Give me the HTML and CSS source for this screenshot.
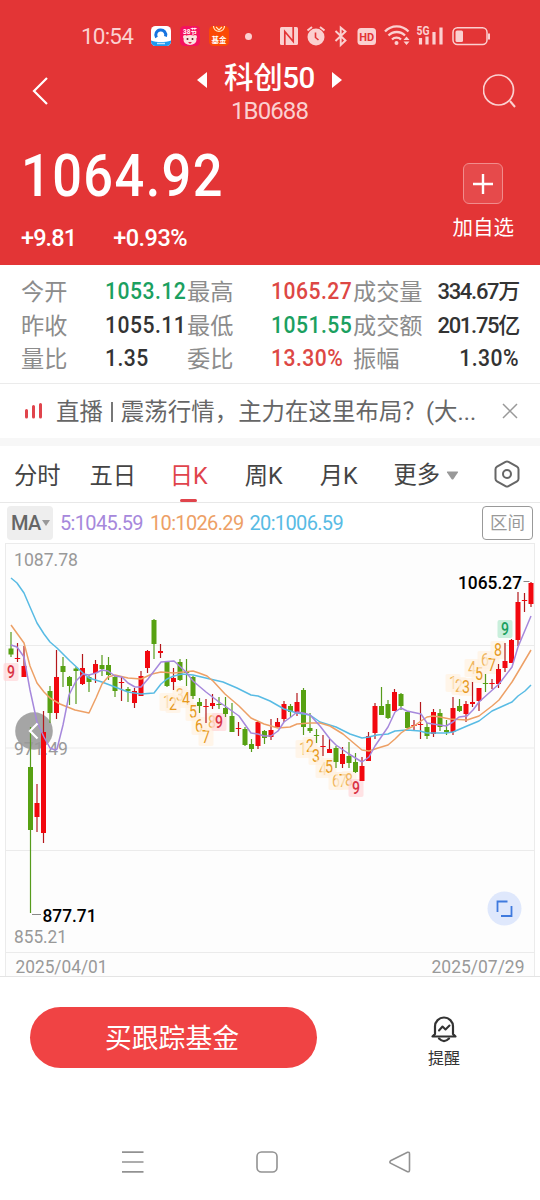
FILE: index.html
```html
<!DOCTYPE html>
<html lang="zh-CN">
<head>
    <meta charset="UTF-8">
    <meta name="viewport" content="width=device-width, initial-scale=1.0">
    <title>科创50</title>
    <link rel="stylesheet" href="styles.css">
</head>
<body>
    <header class="header">
        <div class="status">
            <span class="clock">10:54</span>
            <svg class="app" width="20" height="20" viewBox="0 0 20 20">
                <rect width="20" height="20" rx="4.5" fill="#fff"/>
                <path d="M0 14.500c6 2 14 2 20 0v1a4.500 4.500 0 0 1-4.500 4.500h-11A4.500 4.500 0 0 1 0 15.500z" fill="#1f9bf0"/>
                <path d="M5.500 11.500a5 5 0 1 1 9-1" fill="none" stroke="#1674e0" stroke-width="3"/>
                <path d="M6 17.500h8" stroke="#bfe4ff" stroke-width="1.500"/>
            </svg>
            <svg class="app" width="20" height="20" viewBox="0 0 20 20">
                <rect width="20" height="20" rx="4.5" fill="#f5115f"/>
                <text x="10" y="7.500" class="app-text" font-size="6.500">38节</text>
                <ellipse cx="10" cy="14" rx="6.500" ry="5" fill="#fbe3e0"/>
                <circle cx="5" cy="11" r="2" fill="#fbe3e0"/>
                <circle cx="15" cy="11" r="2" fill="#fbe3e0"/>
                <circle cx="7.500" cy="13" r="1" fill="#5b1a2a"/>
                <circle cx="12.500" cy="13" r="1" fill="#5b1a2a"/>
                <path d="M8 16h4l-2 2z" fill="#e02850"/>
            </svg>
            <svg class="app" width="20" height="20" viewBox="0 0 20 20">
                <rect width="20" height="20" rx="4.500" fill="#fb4a05"/>
                <path d="M4.500 0a5.500 5.500 0 0 0 11 0M7 1l3 3 3-3" fill="none" stroke="#ffe9c8" stroke-width="1.200"/>
                <text x="10" y="16.500" class="app-text" font-size="7.500">基金</text>
            </svg>
            <span class="dot"></span>
            <svg class="sys" width="212" height="24" viewBox="279 25 212 24" fill="none" stroke="#fbd0d0" stroke-width="1.600">
                <!-- nfc -->
                <rect x="280" y="28" width="18" height="18" rx="1.500" fill="#fbd0d0" stroke="none"/>
                <path d="M284.800 46V32.500l8.400 10V28" stroke="#e33536" stroke-width="1.700"/>
                <!-- alarm -->
                <circle cx="316" cy="38" r="8.500" fill="#fbd0d0" stroke="none"/>
                <path d="M307.500 31.500l4.500-3.500M324.500 31.500l-4.500-3.500" stroke-width="2"/>
                <path d="M315.500 33.500v5l3 2.500" stroke="#e33536" stroke-width="1.600"/>
                <!-- bluetooth -->
                <path d="M335.500 32l10 9.500-4.800 4.500V28.500l4.800 4-10 9.500" stroke-width="1.900"/>
                <!-- hd -->
                <rect x="357.500" y="29" width="18.500" height="17" rx="3.500" fill="#fbd0d0" stroke="none"/>
                <text x="366.800" y="42" class="hd">HD</text>
                <!-- wifi -->
                <path d="M385 32.500a16 16 0 0 1 23.500 0M388.500 36.500a11.500 11.500 0 0 1 16.500 0M392 40.500a6.500 6.500 0 0 1 9 0" stroke-width="2.300"/>
                <circle cx="396.500" cy="44" r="2" fill="#fbd0d0" stroke="none"/>
                <path d="M403.500 41l3-3.500 3 3.500zM403.500 42.500l3 3.500 3-3.500z" fill="#fbd0d0" stroke="none"/>
                <!-- signal -->
                <text x="416.500" y="35.700" class="net" textLength="13" lengthAdjust="spacingAndGlyphs">5G</text>
                <path d="M420.500 39V45.500M427 37.500v8M434 33v12.500M441 28.500v17" stroke-width="3.200"/>
                <!-- battery -->
                <rect x="453" y="28.800" width="34" height="16.800" rx="4.500" stroke-width="1.500"/>
                <rect x="455.500" y="31.500" width="7.500" height="11.500" rx="1.500" fill="#fbd0d0" stroke="none"/>
                <path d="M489 34.500v6" stroke-width="2"/>
            </svg>
        </div>

        <div class="topbar">
            <svg width="20" height="30" viewBox="0 0 20 30" fill="none" stroke="#fff" stroke-width="2.200">
                <path d="M17 2L4 15l13 13"/>
            </svg>
            <div class="title">
                <div class="name">
                    <svg width="10" height="16" viewBox="0 0 10 16" fill="#fff"><path d="M10 0v16L0 8z"/></svg>
                    <h1>科创50</h1>
                    <svg width="10" height="16" viewBox="0 0 10 16" fill="#fff"><path d="M0 0v16l10-8z"/></svg>
                </div>
                <div class="code">1B0688</div>
            </div>
            <svg width="34" height="36" viewBox="0 0 34 36" fill="none" stroke="#fbd0d0" stroke-width="1.700">
                <circle cx="15.500" cy="17" r="15"/>
                <path d="M27 28l5 6" stroke-width="2"/>
            </svg>
        </div>

        <div class="price-row">
            <div>
                <div class="price">1064.92</div>
                <div class="change"><span>+9.81</span><span>+0.93%</span></div>
            </div>
            <div class="add">
                <div class="add-box">
                    <svg width="22" height="22" viewBox="0 0 22 22" stroke="#fff" stroke-width="2.400"><path d="M11 1v20M1 11h20"/></svg>
                </div>
                <div>加自选</div>
            </div>
        </div>
    </header>

    <section class="quote">
        <span class="label">今开</span><span class="num green">1053.12</span>
        <span class="label">最高</span><span class="num red">1065.27</span>
        <span class="label">成交量</span><span class="right small">334.67万</span>
        <span class="label">昨收</span><span class="num">1055.11</span>
        <span class="label">最低</span><span class="num green">1051.55</span>
        <span class="label">成交额</span><span class="right small">201.75亿</span>
        <span class="label">量比</span><span class="num">1.35</span>
        <span class="label">委比</span><span class="num red">13.30%</span>
        <span class="label">振幅</span><span class="num right">1.30%</span>
    </section>

    <section class="news">
        <svg width="20" height="18" viewBox="0 0 20 18" stroke="#e0444c" stroke-width="3" stroke-linecap="round">
            <path d="M2.500 8.500V15M9.500 4.500V15M16.500 2.500V15"/>
        </svg>
        <p><span>直播</span><i class="bar"></i><span class="headline">震荡行情，主力在这里布局？(大...</span></p>
        <svg width="16" height="16" viewBox="0 0 16 16" stroke="#999" stroke-width="1.500"><path d="M1 1l14 14M15 1L1 15"/></svg>
    </section>

    <nav class="tabs">
        <span>分时</span>
        <span>五日</span>
        <span class="active">日K</span>
        <span>周K</span>
        <span>月K</span>
        <span class="more">更多
            <svg width="13" height="9" viewBox="0 0 13 9" fill="#999"><path d="M1.500.5h10q1 0 .4 1L7.500 8q-1 1-2 0L1 1.500q-.5-1 .5-1z"/></svg>
        </span>
        <svg class="gear" width="28" height="28" viewBox="0 0 28 28" fill="none" stroke="#666" stroke-width="2">
            <path d="M12.500 1.800q1.500-.8 3 0l8.500 4.900q1.500.9 1.500 2.600v9.400q0 1.700-1.500 2.600l-8.500 4.900q-1.500.8-3 0L4 21.300q-1.500-.9-1.500-2.600V9.300Q2.500 7.600 4 6.700z"/>
            <circle cx="14" cy="14" r="4"/>
        </svg>
    </nav>

    <div class="ma">
        <span class="ma-btn">MA<svg width="8" height="6" viewBox="0 0 8 6" fill="#999"><path d="M0 0h8L4 6z"/></svg></span>
        <span class="ma5">5:1045.59</span>
        <span class="ma10">10:1026.29</span>
        <span class="ma20">20:1006.59</span>
        <span class="range">区间</span>
    </div>

    <svg id="chart" class="chart" width="540" height="434" viewBox="0 543 540 434"></svg>

    <footer class="footer">
        <div class="buy">买跟踪基金</div>
        <div class="remind">
            <svg width="28" height="28" viewBox="0 0 28 28" fill="none" stroke="#333" stroke-width="2.200" stroke-linecap="round" stroke-linejoin="round">
                <path d="M2.500 21.500L5 19V11.500a9 9 0 0 1 18 0V19l2.500 2.500z"/>
                <path d="M9 23.500q5 5 10 0"/>
                <path d="M9 15.500l3.500-4 3 3 4-4" stroke-width="2"/>
            </svg>
            <div>提醒</div>
        </div>
    </footer>

    <div class="sysnav">
        <svg width="22" height="22" viewBox="0 0 22 22" stroke="#929292" stroke-width="1.700"><path d="M0 1.200h21.500M0 11h21.500M0 20.800h21.500"/></svg>
        <svg width="22" height="22" viewBox="0 0 22 22" fill="none" stroke="#929292" stroke-width="1.600"><rect x="1" y="1" width="20" height="20" rx="4.500"/></svg>
        <svg width="22" height="22" viewBox="0 0 22 22" fill="none" stroke="#929292" stroke-width="1.600"><path d="M1.500 9.800L18.500 1.300Q20.500.8 20.500 3v16q0 2.200-2 1.700L1.500 12.200q-1.200-1.200 0-2.400z"/></svg>
    </div>

    <script>
        // high, body top, body bottom, low, up(1) / down(0)
        const candles = [
            [632,648.5,654.5,657,0],[643,658,659,662,1],[646,666,677,677,1],[727,767,830,913,0],[784,803,817,832,1],
            [711,732,833,843,1],[686,691,713,723,0],[650,677,713,719,1],[657,666,672,687,0],[676,677,686,705,0],
            [667,668.5,671,704,0],[654,668,684,685,1],[675,677,682,692,0],[660,664,673,683,1],[655,665,669,676,0],
            [657,665,675,680,0],[675,677,691,697,0],[677,682,683,701,1],[687,689,691,702,0],[688,691,703,708,1],
            [671,676,696,696,1],[650,651,668,673,1],[619,620,644,659,0],[644,651,653,658,1],[661,662,686,687,0],
            [668,678,682,690,1],[659,662,680,681,0],[659,672,673,686,0],[676,677,696,699,0],[698,702,706,713,0],
            [699,706,707,723,1],[694,703,706,709,1],[697,704,705,709,0],[697,708,714,717,0],[703,716,732,732,0],
            [722,728,729,736,1],[727,729,745,746,0],[739,744,749,752,0],[721,722,746,749,1],[730,731,738,744,0],
            [719,730,737,740,1],[718,722,727,728,1],[701,704,719,722,1],[704,706,712,717,0],[693,702,713,716,1],
            [688,690,727,735,0],[713,728,731,733,0],[729,735,736,743,0],[735,746,747,756,1],[739,749,753,753,1],
            [746,748,762,768,0],[747,754,764,768,1],[742,756,763,768,0],[753,762,772,773,0],[757,766,781,781,1],
            [732,736,761,761,1],[703,706,733,739,1],[687,706,715,715,0],[700,704,718,719,0],[689,692,711,711,1],
            [693,694,706,710,0],[711,712,728,729,0],[720,725,726,731,1],[702,724,725,739,1],[723,727,736,739,0],
            [709,712,734,737,1],[709,713,727,731,0],[720,730,732,735,0],[697,708,732,735,1],[699,706,711,712,0],
            [701,704,714,722,1],[682,702,704,707,1],[688,688,701,711,1],[674,683,684,692,0],[679,683,684,689,1],
            [664,669,684,688,1],[643,661,668,672,1],[639,640,663,663,1],[592,602,640,646,1],[593,600,601,612,1],
            [582,583,604,607,1]
        ];
        const lines = {
            '#58bbe4': '11,578 17,583 24,593 30,607 37,623 44,634 50,642 57,648 70,661 83,673 89,678 102,682 115,687 128,692 141,694 154,693 161,684 167,679 174,676 182,674 193,675 210,679 223,682 237,688 251,695 258,696 270,701 284,709 297,713 310,715 320,722 336,727 350,734 362,738 369,737 377,735 388,734 395,731 407,730 420,731 427,733 446,733 453,732 467,726 479,721 492,711 512,702 518,696 525,691 531,685',
            '#eda066': '11,625 24,643 30,666 37,683 44,692 50,698 60,704 75,710 89,713 96,698 102,684 108,677 115,675 128,678 141,679 152,674 161,672 174,673 193,671 199,673 207,676 213,681 225,694 239,706 251,718 264,724 278,728 290,727 297,724 310,723 320,723 330,726 343,734 356,745 362,750 369,751 378,748 388,745 395,739 401,733 407,729 414,726 421,721 427,717 433,716 440,717 450,719 467,720 479,716 492,706 499,700 512,682 518,672 531,650',
            '#a688dc': '11,645 17,647 24,657 30,690 37,722 44,737 50,748 55,750 57,749 63,725 69,695 76,681 83,674 89,675 96,673 102,670 108,671 115,676 122,677 128,683 135,687 141,687 148,679 161,662 174,661 186,672 193,681 206,692 219,702 225,706 239,716 251,733 258,734 264,736 271,736 278,731 284,722 291,717 297,712 303,713 310,715 320,726 330,739 336,745 349,754 362,762 369,757 375,746 388,727 395,712 401,708 407,711 421,714 427,723 433,724 446,726 453,722 459,717 467,716 473,710 479,702 499,684 512,667 518,647 531,616'
        };
        // x, y, digit, kind
        const marks = [
            [11,672,9,'hot'],
            [167,702,1,'dim'],[173,704,2,''],[180,695,3,'dim'],[186,699,4,''],[193,712,5,''],[199,726,6,''],[206,737,7,''],[212,722,8,'dim'],[219,722,9,'hot'],
            [303,749,1,'dim'],[310,746,2,''],[316,756,3,''],[323,769,4,'dim'],[329,767,5,''],[336,781,6,'dim'],[343,781,7,''],[349,780,8,'dim'],[356,788,9,'hot'],
            [453,683,1,'dim'],[459,686,2,'dim'],[466,687,3,''],[472,668,4,'dim'],[479,674,5,''],[485,660,6,'dim'],[492,665,7,''],[498,650,8,''],[505,629,9,'cool']
        ];

        let out = '<rect class="frame" x="5.5" y="543.5" width="529" height="440"/>';
        [645.5, 748, 850.5, 952.5].forEach(y => out += `<path class="grid" d="M5.5 ${y}h529"/>`);
        out += '<path class="bottom" d="M0 976.500h540"/>';

        function label(x, y, w, text, cls) {
            out += `<text class="${cls}" x="${x}" y="${y}" textLength="${w}" lengthAdjust="spacingAndGlyphs">${text}</text>`;
        }
        out += '<circle cx="34" cy="731" r="18.800" fill="#a5a5a5"/>';
        label(14, 566, 64, '1087.78', 'axis');
        label(14, 755, 54, '971.49', 'axis');
        label(14, 942.5, 53, '855.21', 'axis');
        label(15.5, 972.5, 92, '2025/04/01', 'axis');
        label(431.5, 972.5, 93, '2025/07/29', 'axis');

        marks.forEach(([x, y, n, kind]) => {
            out += `<g class="mark ${kind}"><rect x="${x - 7.5}" y="${y - 9}" width="15" height="18" rx="2"/><text x="${x - 4}" y="${y + 6}" textLength="8" lengthAdjust="spacingAndGlyphs">${n}</text></g>`;
        });

        candles.forEach(([high, top, bottom, low, up], i) => {
            const x = 11 + i * 6.5;
            const h = bottom - top;
            const w = h < 1.5 ? 5.4 : 5;
            out += `<g class="${up ? 'up' : 'down'}"><path d="M${x} ${high}V${low}"/><rect x="${x - w / 2}" y="${top}" width="${w}" height="${h}"/></g>`;
        });

        for (const color in lines) {
            out += `<polyline class="line" stroke="${color}" points="${lines[color]}"/>`;
        }

        out += '<path d="M37.500 723.500l-7.500 7.500 7.500 7.500" fill="none" stroke="#fff" stroke-width="2.200"/>';
        out += '<path d="M32 914.500h9M523.500 581.500h6" stroke="#888"/>';
        label(42.5, 922, 54, '877.71', 'peak');
        label(458, 589, 64, '1065.27', 'peak');

        out += '<circle cx="504.500" cy="908.500" r="17" fill="#dfe8fc"/>';
        out += '<path d="M497.500 912v-10.500h10M511.500 906v10h-10.500" fill="none" stroke="#3f7ade" stroke-width="1.800"/>';

        document.getElementById('chart').innerHTML = out;
    </script>
</body>
</html>
```
FILE: styles.css
```css
body {
    margin: 0;
    width: 540px;
    height: 1200px;
    background-color: #fff;
    color: #333;
    font-family: Roboto, "Noto Sans CJK SC", sans-serif;
    overflow: hidden;
}
svg {
    display: block;
    flex: none;
}
.header {
    height: 265px;
    background-color: #e33536;
    color: #fff;
}
.status {
    display: flex;
    align-items: center;
    height: 44px;
    padding: 14px 0 0 81px;
}
.clock {
    width: 70px;
    font-size: 22.5px;
    line-height: 24px;
    letter-spacing: -0.8px;
    color: #fbd0d0;
}
.app {
    margin-right: 9px;
}
.app-text {
    fill: #fff;
    font-weight: 700;
    text-anchor: middle;
}
.dot {
    width: 7px;
    height: 7px;
    margin: 0 27px 0 7px;
    border-radius: 50%;
    background-color: #fbd0d0;
}
.hd {
    font-size: 11px;
    font-weight: 700;
    text-anchor: middle;
    fill: #e33536;
    stroke: none;
}
.net {
    font-size: 12px;
    font-weight: 700;
    fill: #fbd0d0;
    stroke: none;
}
.topbar {
    display: flex;
    justify-content: space-between;
    align-items: center;
    height: 66px;
    padding: 0 23px 0 30px;
}
.title {
    text-align: center;
    padding-top: 2px;
    margin-left: 6px;
}
.name {
    display: flex;
    align-items: center;
    justify-content: center;
    gap: 17px;
}
.name svg {
    margin-top: 4px;
}
.name h1 {
    margin: 0;
    font-size: 29.5px;
    font-weight: 500;
    line-height: 38px;
    letter-spacing: -0.4px;
}
.code {
    font-size: 24px;
    line-height: 29px;
    letter-spacing: -0.9px;
    color: #fbd0d0;
}
.price-row {
    display: flex;
    justify-content: space-between;
    padding: 20px 26px 0 21px;
}
/* the figures are narrower than the text face */
.price {
    font-size: 59.5px;
    font-weight: 500;
    line-height: 64px;
    letter-spacing: 1.6px;
    transform: scaleX(0.88);
    transform-origin: left;
}
.change {
    display: flex;
    gap: 37px;
    margin-top: 16px;
    font-size: 23.5px;
    line-height: 28px;
    letter-spacing: -0.9px;
    font-weight: 500;
}
.change span + span {
    letter-spacing: -0.5px;
}
.add {
    padding-top: 19px;
    text-align: center;
    font-size: 20.5px;
    line-height: 30px;
}
.add-box {
    display: flex;
    justify-content: center;
    align-items: center;
    width: 38px;
    height: 39px;
    margin: 0 auto 9px;
    border: 1px solid #f18c8c;
    border-radius: 6px;
    background-color: #e64a4b;
}
.quote {
    display: grid;
    grid-template-columns: 83.5px 82.5px 83.5px 82.5px 79px 87px;
    grid-auto-rows: 33.5px;
    height: 119px;
    box-sizing: border-box;
    padding: 10px 0 0 21px;
    border-bottom: 1px solid #ebebeb;
    font-size: 24px;
    font-weight: 500;
    line-height: 33px;
    white-space: nowrap;
}
.label {
    padding-top: 1px;
    font-size: 23.2px;
    font-weight: 400;
    color: #8c8c8c;
}
.num {
    letter-spacing: 0.55px;
    transform: scaleX(0.88);
    transform-origin: left;
}
.green {
    color: #1ba05f;
}
.red {
    color: #dd4744;
}
.right {
    text-align: right;
    transform-origin: right;
}
.small {
    font-size: 22px;
    letter-spacing: -1.3px;
}
.news {
    display: flex;
    align-items: center;
    height: 54px;
    padding: 0 22px 0 24px;
    border-bottom: 8px solid #f7f7f7;
    color: #666;
    font-size: 23.4px;
}
.news p {
    display: flex;
    align-items: center;
    flex: 1;
    margin: 0 0 0 12px;
    padding-top: 2px;
    line-height: 34px;
    white-space: nowrap;
}
.news .bar {
    width: 2px;
    height: 20px;
    margin: 0 8px;
    background-color: #777;
}
.headline {
    letter-spacing: 0.08px;
}
.tabs {
    display: flex;
    height: 56px;
    border-bottom: 1px solid #e8e8e8;
    padding-left: 14px;
    font-size: 23.3px;
    line-height: 61px;
    color: #444;
}
.tabs span {
    position: relative;
    margin-right: 28.8px;
}
.tabs .active {
    margin-left: 5px;
    margin-right: 37px;
    color: #e0444c;
}
.tabs .active::after {
    content: "";
    position: absolute;
    left: 10px;
    bottom: 0;
    width: 17px;
    height: 3px;
    border-radius: 2px;
    background-color: #e0444c;
}
.tabs .active + span,
.tabs .active + span + span {
    margin-right: 37px;
}
.tabs .more {
    display: flex;
    align-items: center;
    gap: 6px;
    height: 61px;
    margin: -1px 34px 0 -1px;
}
.gear {
    margin-top: 14px;
}
.ma {
    display: flex;
    align-items: center;
    height: 40px;
    padding: 0 7px;
    font-size: 20px;
    letter-spacing: -0.65px;
}
.ma-btn {
    display: flex;
    align-items: center;
    width: 42px;
    height: 34px;
    padding-left: 4px;
    margin-right: 7px;
    border-radius: 4px;
    background-color: #eee;
    color: #666;
    font-weight: 500;
    gap: 1px;
}
.ma5 {
    color: #a688dc;
    margin-right: 7px;
}
.ma10 {
    color: #eda066;
    margin-right: 6px;
}
.ma20 {
    color: #58bbe4;
}
.range {
    width: 49px;
    height: 32px;
    margin-left: auto;
    border: 1px solid #999;
    border-radius: 4px;
    font-size: 17.5px;
    line-height: 33px;
    letter-spacing: 0;
    text-align: center;
    color: #999;
}
.frame {
    fill: #fdfdfd;
    stroke: #ebebeb;
}
.grid {
    stroke: #ebebeb;
}
.bottom {
    stroke: #e4e4e4;
}
.axis {
    font-size: 19px;
    fill: #999;
}
.peak {
    font-size: 19px;
    font-weight: 500;
    fill: #000;
}
.line {
    fill: none;
    stroke-width: 1.5;
    stroke-linejoin: round;
}
.up path {
    stroke: #b3181c;
    stroke-width: 1.2;
}
.up rect {
    fill: #f2080f;
}
.down path {
    stroke: #569b1c;
    stroke-width: 1.2;
}
.down rect {
    fill: #57a112;
}
.mark rect {
    fill: #fff1e0;
    opacity: 0.7;
}
.mark text {
    font-size: 18px;
    fill: #e79a1e;
}
.mark.dim text {
    fill: #f0b560;
}
.mark.hot rect {
    fill: #ffd5d8;
}
.mark.hot text {
    fill: #d93445;
    font-weight: 500;
}
.mark.cool rect {
    fill: #c9efdc;
    opacity: 1;
}
.mark.cool text {
    fill: #1ba05f;
    font-weight: 500;
}
.footer {
    display: flex;
    padding: 30px 0 0 30px;
}
.buy {
    width: 287px;
    height: 61px;
    border-radius: 31px;
    background-color: #f04344;
    color: #fff;
    font-size: 26.8px;
    line-height: 64px;
    text-align: center;
    text-indent: -3px;
}
.remind {
    display: flex;
    flex-direction: column;
    align-items: center;
    margin: 8px 0 0 111px;
    font-size: 16px;
    line-height: 31px;
}
.sysnav {
    display: flex;
    gap: 111.5px;
    padding: 77px 0 0 122px;
}
```
